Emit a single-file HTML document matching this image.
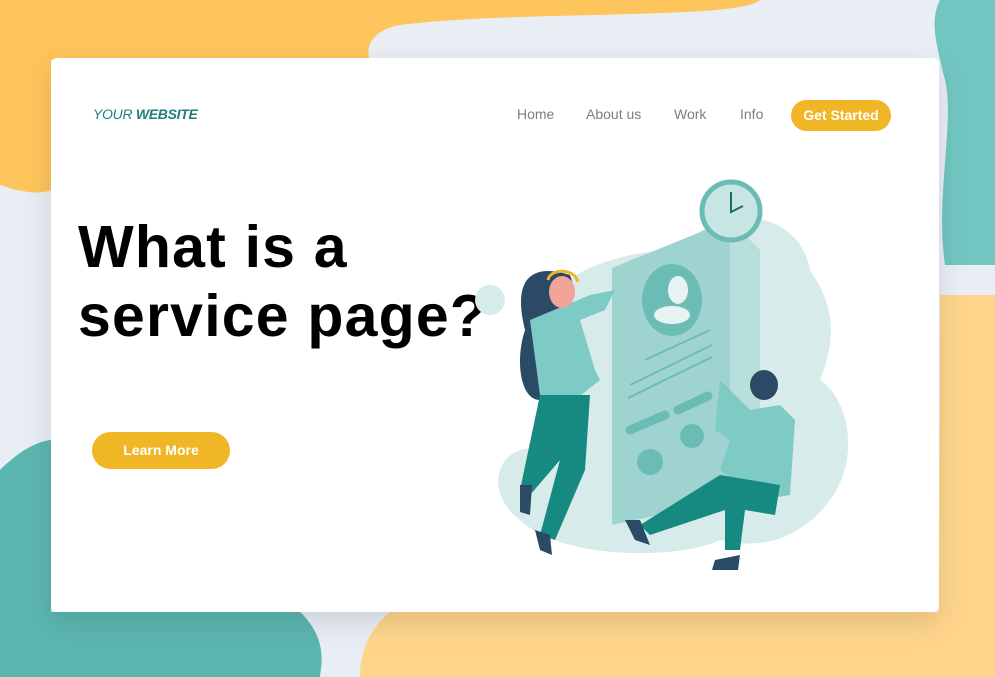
<!DOCTYPE html>
<html><head><meta charset="utf-8"><style>
body{margin:0;width:995px;height:677px;overflow:hidden;position:relative;font-family:"Liberation Sans",sans-serif;background:#e9eef5}
svg.bg{position:absolute;left:0;top:0}
.card{position:absolute;left:51px;top:58px;width:888px;height:554px;background:#fff;border-radius:6px;box-shadow:0 10px 30px rgba(0,0,0,.12)}
.logo{position:absolute;left:42px;top:48px;font-size:14px;font-style:italic;color:#1d7f7c;letter-spacing:-.3px}
.logo b{font-weight:bold}
.nav{position:absolute;top:48px;font-size:14px;color:#7d7d7d}
.btn{position:absolute;background:#f0b626;color:#fff;border-radius:20px;font-weight:bold;font-size:14px;text-align:center}
h1{position:absolute;left:27px;top:155px;margin:0;font-size:59px;line-height:69px;font-weight:bold;color:#000;letter-spacing:1.2px}
</style></head><body>
<svg class="bg" width="995" height="677">
<path d="M0 0H760C740 20 520 10 400 25C370 30 365 50 370 60H51V190C40 195 20 192 0 185Z" fill="#fec55c"/>
<path d="M940 0H995V265H945C935 200 955 120 945 80C935 40 930 20 940 0Z" fill="#72c6c1"/>
<path d="M940 295H995V677H360C360 640 380 620 390 612H939Z" fill="#fed58b"/>
<path d="M0 470C30 440 51 440 51 440V612H300C330 640 320 670 320 677H0Z" fill="#5cb6b0"/>
</svg>
<div class="card">
<div class="logo">YOUR <b>WEBSITE</b></div>
<div class="nav" style="left:466px">Home</div>
<div class="nav" style="left:535px">About us</div>
<div class="nav" style="left:623px">Work</div>
<div class="nav" style="left:689px">Info</div>
<div class="btn" style="left:740px;top:42px;width:100px;height:31px;line-height:31px">Get Started</div>
<h1>What is a<br>service page?</h1>
<div class="btn" style="left:41px;top:374px;width:138px;height:37px;line-height:37px">Learn More</div>
<svg style="position:absolute;left:419px;top:102px" width="400" height="420" viewBox="470 160 400 420">
<path d="M540 330C530 290 600 250 680 250C720 200 800 210 810 270C830 300 840 330 820 380C850 400 860 460 830 500C800 540 760 550 720 540C680 560 560 560 520 520C480 490 500 440 540 450Z" fill="#d6ebea"/>
<circle cx="490" cy="300" r="15" fill="#d6ebea"/>
<path d="M612 268L730 220V500L612 525Z" fill="#9fd3cf"/>
<path d="M730 220L760 250V500L730 500Z" fill="#b9dfdc"/>
<ellipse cx="672" cy="300" rx="30" ry="36" fill="#6cbcb6"/>
<ellipse cx="678" cy="290" rx="10" ry="14" fill="#e6f3f2"/><ellipse cx="672" cy="315" rx="18" ry="9" fill="#e6f3f2"/>
<path d="M645 360L710 330M630 385L712 345M628 398L712 357" stroke="#6cbcb6" stroke-width="2"/>
<path d="M630 430L665 415M678 410L708 396" stroke="#6cbcb6" stroke-width="9" stroke-linecap="round"/>
<circle cx="650" cy="462" r="13" fill="#6cbcb6"/><circle cx="692" cy="436" r="12" fill="#6cbcb6"/>
<circle cx="731" cy="211" r="29" fill="#c7e6e3" stroke="#6cbcb6" stroke-width="5"/>
<path d="M731 192V212L743 206" stroke="#1e6c6a" stroke-width="2" fill="none"/>
<path d="M525 330C510 270 540 265 570 275C580 300 560 320 540 400C520 400 515 360 525 330Z" fill="#2b4a66"/>
<path d="M530 320L590 295L615 290L605 310L580 320L595 370L600 380L575 400L540 395Z" fill="#7ecbc6"/>
<path d="M540 395L590 395L585 470L555 540L540 535L560 460L530 495L520 490Z" fill="#168a80"/>
<path d="M520 485L532 485L530 515L520 512ZM535 530L550 535L552 555L540 550Z" fill="#2b4a66"/>
<ellipse cx="562" cy="292" rx="13" ry="16" fill="#f0a598"/>
<path d="M548 280C550 268 575 268 578 282" stroke="#f0b626" stroke-width="3" fill="none"/>
<ellipse cx="764" cy="385" rx="14" ry="15" fill="#2b4a66"/>
<path d="M720 380L750 410L780 405L795 420L790 495L760 500L720 470L730 440L715 430Z" fill="#7ecbc6"/>
<path d="M640 525L720 475L780 485L775 515L745 510L740 550L725 550L725 510L650 535Z" fill="#168a80"/>
<path d="M625 520L640 520L650 545L635 540ZM715 560L740 555L738 570L712 570Z" fill="#2b4a66"/>
</svg>
</div>
</body></html>
